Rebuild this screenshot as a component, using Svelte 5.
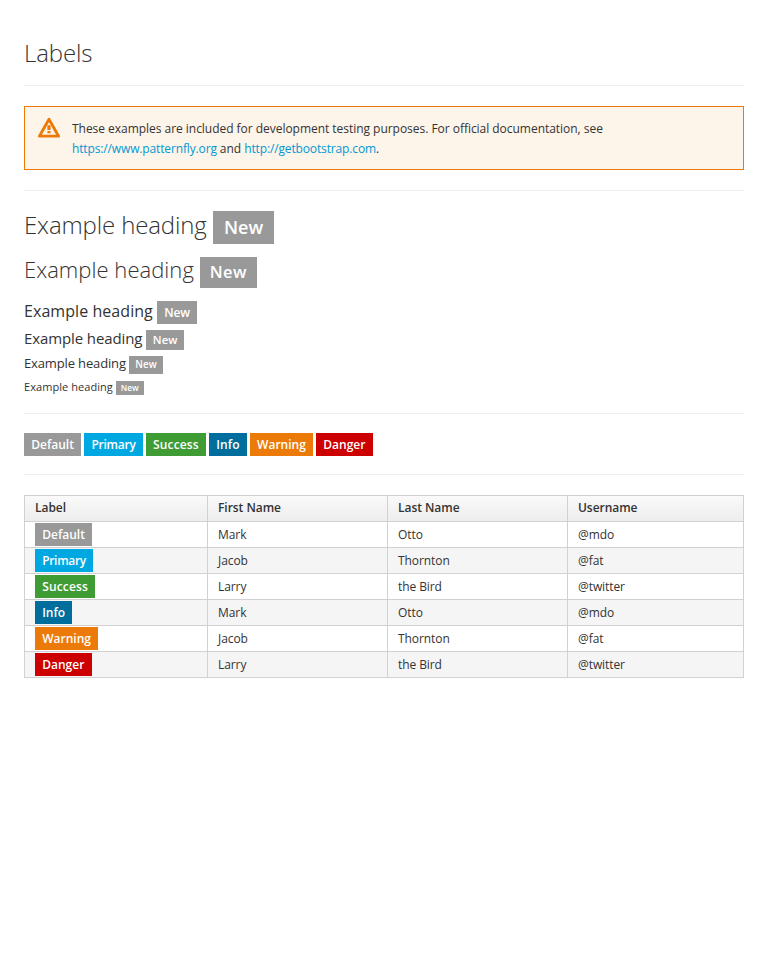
<script>
  const kinds = ['Default', 'Primary', 'Success', 'Info', 'Warning', 'Danger'];
  const people = [
    ['Mark', 'Otto', '@mdo'],
    ['Jacob', 'Thornton', '@fat'],
    ['Larry', 'the Bird', '@twitter']
  ];
</script>

<main>
  <div class="page-header"><h1>Labels</h1></div>
  <div class="alert">
    <svg width="24" height="22" viewBox="0 0 24 22">
      <path d="M12 2.2 L21.6 19.2 H2.4 Z" fill="none" stroke="#ec7a08" stroke-width="2.8" stroke-linejoin="round" />
      <path d="M10.4 8.2h3.2v4.8h-3.2zM10.4 14h3.2v2.2h-3.2z" fill="#ec7a08" />
    </svg>
    These examples are included for development testing purposes. For official documentation, see <a href="https://www.patternfly.org">https://www.patternfly.org</a> and <a href="http://getbootstrap.com">http://getbootstrap.com</a>.
  </div>
  <hr />
  <h1>Example heading <span class="label default">New</span></h1>
  <h2>Example heading <span class="label default">New</span></h2>
  <h3>Example heading <span class="label default">New</span></h3>
  <h4>Example heading <span class="label default">New</span></h4>
  <h5>Example heading <span class="label default">New</span></h5>
  <h6>Example heading <span class="label default">New</span></h6>
  <hr />
  <div class="row">
    {#each kinds as kind}<span class="label {kind.toLowerCase()}">{kind}</span>{' '}{/each}
  </div>
  <hr />
  <table>
    <colgroup><col class="first" /><col class="mid" /><col class="mid" /><col /></colgroup>
    <thead>
      <tr><th>Label</th><th>First Name</th><th>Last Name</th><th>Username</th></tr>
    </thead>
    <tbody>
      {#each kinds as kind, i}
        <tr>
          <td><span class="label {kind.toLowerCase()}">{kind}</span></td>
          {#each people[i % 3] as value}<td>{value}</td>{/each}
        </tr>
      {/each}
    </tbody>
  </table>
</main>

<style>
  :global(body) { margin: 0; background: #fff; }
  main {
    box-sizing: border-box;
    padding: 0 24px;
    font: 12px/20px "Open Sans", sans-serif;
    color: #333;
    display: flow-root;
  }
  h1, h2 { font-weight: 300; }
  h3, h4, h5, h6 { font-weight: 400; }
  h1 { font-size: 24px; line-height: 28px; margin: 20px 0 18px; letter-spacing: -.13px; }
  h2 { font-size: 22px; line-height: 24px; margin: 18px 0 21px; letter-spacing: .04px; }
  h3 { font-size: 16px; line-height: 18px; margin: 21px 0 10px; letter-spacing: .06px; }
  h4 { font-size: 15px; line-height: 17px; margin: 10px 0 9px; letter-spacing: -.11px; }
  h5 { font-size: 13px; line-height: 14px; margin: 9px 0 11px; letter-spacing: -.14px; }
  h6 { font-size: 11px; line-height: 12px; margin: 11px 0 20px; letter-spacing: .06px; }
  .page-header { margin: 40px 0 20px; padding-bottom: 9px; border-bottom: 1px solid #eee; }
  .page-header h1 { margin: 0 0 10px; line-height: 26px; }
  hr { border: 0; border-top: 1px solid #eee; margin: 20px 0; }
  .alert {
    position: relative;
    border: 1px solid #ec7a08;
    background: #fdf4ea;
    padding: 12px 47px 10px;
    margin-bottom: 20px;
    letter-spacing: -.033px;
  }
  .alert svg { position: absolute; left: 12px; top: 10px; }
  a { color: #0099d3; text-decoration: none; letter-spacing: -.14px; }
  .label {
    padding: .2em .6em .3em;
    font-size: 75%;
    font-weight: 600;
    line-height: 1;
    letter-spacing: 0;
    color: #fff;
    white-space: nowrap;
  }
  h1 .label { padding: .245em .62em .255em; }
  h2 .label { letter-spacing: .35px; padding: .2em .62em .32em; }
  h3 .label { letter-spacing: -.2px; padding: .28em .6em .22em; }
  h5 .label { letter-spacing: .15px; padding-right: .65em; padding-left: .63em; }
  h6 .label { padding: .12em .6em .3em; }
  .row .label, td .label { font-size: 100%; padding: 3.4px 7.2px 2.6px; }
  .default { background: #999; }
  .primary { background: #00a8e1; }
  .success { background: #3f9c35; }
  .info { background: #006e9c; }
  .warning { background: #ec7a08; }
  .danger { background: #c00; }
  .primary { letter-spacing: -.25px; }
  .success { letter-spacing: .14px; }
  .row .info { letter-spacing: .08px; }
  td .primary { letter-spacing: -.32px; }
  .row { padding-top: 1px; line-height: 19px; }
  table { width: 100%; table-layout: fixed; border-collapse: collapse; border: 1px solid #d1d1d1; }
  .first { width: 183px; }
  .mid { width: 180px; }
  th, td { border: 1px solid #d1d1d1; padding: 2px 10px 3px; text-align: left; line-height: 20px; }
  td { padding: 3px 10px 2px; letter-spacing: -.08px; }
  th { font-weight: 600; letter-spacing: -.04px; }
  thead { background: linear-gradient(#fafafa, #ededed); }
  tbody tr:nth-child(even) { background: #f5f5f5; }
</style>
